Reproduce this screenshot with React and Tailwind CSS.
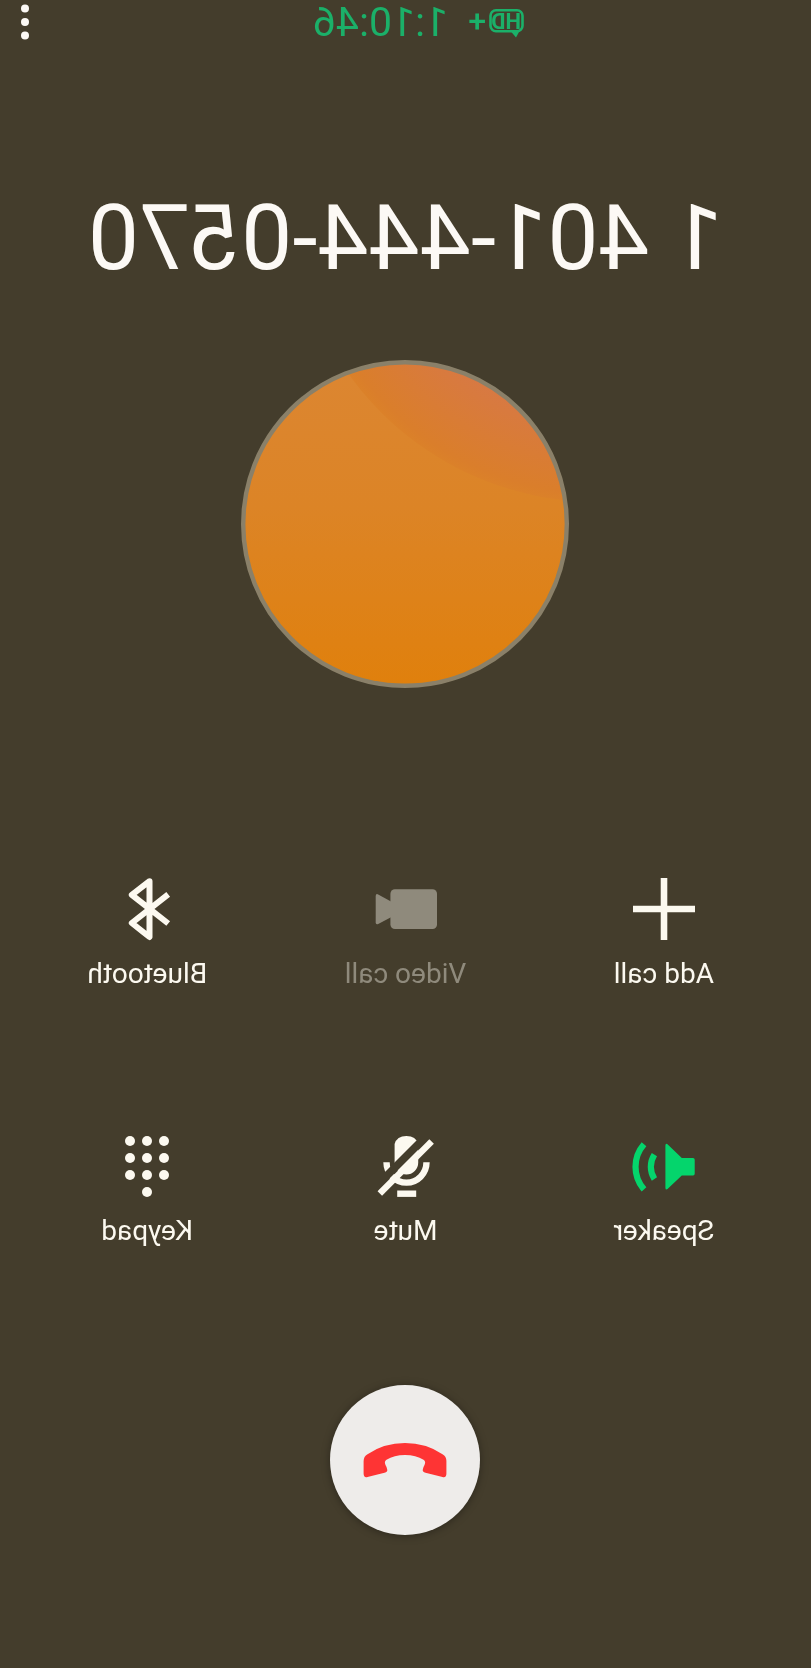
import React from 'react';

const BluetoothIcon = () => (
  <svg viewBox="0 0 64 64" className="w-16 h-16" fill="none" stroke="currentColor" strokeWidth="6" strokeLinejoin="round" aria-hidden="true">
    <path d="M10.8 17.3 47.2 46 29.5 60V4.2L47.2 17.8 10.8 46.5" />
  </svg>
);

const VideoIcon = () => (
  <svg viewBox="0 0 64 64" className="w-16 h-16" fill="currentColor" aria-hidden="true">
    <rect x="1" y="12.3" width="46.6" height="39.7" rx="4.5" />
    <path d="M47 24.5 59.8 17.4Q62.3 16.4 62.3 19V45.4Q62.3 48 59.8 46.9L47 40.2Z" />
  </svg>
);

const PlusIcon = () => (
  <svg viewBox="0 0 64 64" className="w-16 h-16" stroke="currentColor" strokeWidth="6.6" aria-hidden="true">
    <path d="M32 1V63M1 32H63" />
  </svg>
);

const KEY_DOTS = [
  [15, 7], [32, 7], [49, 7],
  [15, 24], [32, 24], [49, 24],
  [15, 41], [32, 41], [49, 41],
  [32, 58],
];

const KeypadIcon = () => (
  <svg viewBox="0 0 64 64" className="w-16 h-16" fill="currentColor" aria-hidden="true">
    {KEY_DOTS.map(([x, y]) => (
      <circle key={`${x}-${y}`} cx={x} cy={y} r="5" />
    ))}
  </svg>
);

const MuteIcon = () => (
  <svg viewBox="0 0 64 64" className="w-16 h-16" fill="none" stroke="currentColor" aria-hidden="true">
    <mask id="mic-cut" maskUnits="userSpaceOnUse" x="0" y="0" width="64" height="64">
      <rect width="64" height="64" fill="#fff" />
      <path d="M7-2.5 71 61.5" stroke="#000" strokeWidth="7.8" />
    </mask>
    <g mask="url(#mic-cut)">
      <path d="M19.8 10Q22 2 31.6 2T43.4 10V28.5A11.8 12 0 0 1 19.8 28.5Z" fill="currentColor" stroke="none" />
      <path d="M11.5 28.3A20 20.3 0 0 0 51.5 28.3" strokeWidth="6.4" />
    </g>
    <path d="M6.4 7.6 58.2 59.4" strokeWidth="6.4" />
    <path d="M21.8 59.7H40.8" strokeWidth="6.4" />
  </svg>
);

const SpeakerIcon = () => (
  <svg viewBox="0 0 64 64" className="w-16 h-16" fill="none" stroke="currentColor" strokeWidth="6.2" aria-hidden="true">
    <path d="M3 24H14.2L28.5 10.3Q30.6 9 30.6 11.6V53.8Q30.6 56.4 28.5 55.1L14.2 41.4H3Q1.3 41.4 1.3 39.7V25.7Q1.3 24 3 24Z" fill="currentColor" stroke="none" />
    <path d="M41.6 20.6A22.5 22.5 0 0 1 41.6 45" />
    <path d="M52 10.2A34.3 34.3 0 0 1 52 55.4" />
  </svg>
);

const HdBadge = () => (
  <svg viewBox="0 0 56 44" className="w-14 h-11" fill="none" stroke="currentColor" role="img" aria-label="HD+">
    <rect x="1.5" y="10.3" width="32" height="21" rx="5.5" strokeWidth="2.6" />
    <path d="M4.5 31H13.5L8 37.5Z" fill="currentColor" stroke="none" />
    <text x="3" y="28.500" fontSize="22" fontWeight="700" fill="currentColor" stroke="none">HD</text>
    <text x="38" y="32" fontSize="32" fontWeight="500" fill="currentColor" stroke="none">+</text>
  </svg>
);

const Avatar = () => (
  <svg viewBox="0 0 328 328" className="w-[328px] h-[328px]" aria-hidden="true">
    <defs>
      <linearGradient id="avatar-base" x1="0" y1="0" x2="0" y2="1">
        <stop offset="0" stopColor="#dc8632" />
        <stop offset="0.45" stopColor="#dc8426" />
        <stop offset="1" stopColor="#e0800c" />
      </linearGradient>
      <radialGradient id="avatar-glow" gradientUnits="userSpaceOnUse" cx="-28" cy="-163" r="305">
        <stop offset="0.66" stopColor="#d77848" />
        <stop offset="0.97" stopColor="#da7e2b" />
        <stop offset="1" stopColor="#db8129" />
      </radialGradient>
      <clipPath id="avatar-clip">
        <circle cx="164" cy="164" r="161" />
      </clipPath>
    </defs>
    <g clipPath="url(#avatar-clip)">
      <rect width="328" height="328" fill="url(#avatar-base)" />
      <circle cx="-28" cy="-163" r="305" fill="url(#avatar-glow)" />
    </g>
    <circle cx="164" cy="164" r="161.8" fill="none" stroke="#8a8069" strokeWidth="4.4" />
  </svg>
);

const EndCallIcon = () => (
  <svg viewBox="0 0 84 36" className="w-[84px] h-9" fill="#fe3434" aria-hidden="true">
    <path d="M0.6 19Q0.6 14.5 4.5 12.2 21 1 42 1T79.5 12.2Q83.4 14.5 83.4 19V31.5Q83.4 36 79.5 35L62.5 30.8Q59.2 30 59.8 27.5 60 25.5 61.5 23 63.2 19.5 60.5 17.8 53 13 42 13T23.5 17.8Q20.8 19.5 22.5 23 24 25.5 24.2 27.5 24.8 30 21.5 30.8L4.5 35Q0.6 36 0.6 31.5Z" />
  </svg>
);

const actions = [
  { id: 'add', label: 'Add call', icon: PlusIcon },
  { id: 'video', label: 'Video call', icon: VideoIcon, disabled: true },
  { id: 'bluetooth', label: 'Bluetooth', icon: BluetoothIcon },
  { id: 'speaker', label: 'Speaker', icon: SpeakerIcon, active: true },
  { id: 'mute', label: 'Mute', icon: MuteIcon },
  { id: 'keypad', label: 'Keypad', icon: KeypadIcon },
];

const ActionButton = ({ label, icon: Icon, active, disabled }) => (
  <button
    type="button"
    disabled={disabled}
    aria-pressed={active}
    className={`flex flex-col items-center gap-[15px] ${disabled ? 'text-[#8f8a7c]' : 'text-[#fcf9f0]'}`}
  >
    <span className={active ? 'text-[#04d56c]' : ''}>
      <Icon />
    </span>
    <span className="text-[28px] leading-9">{label}</span>
  </button>
);

const App = () => (
  <div className="min-h-screen -scale-x-100 bg-[#443d2c] font-['Roboto',sans-serif] text-[#fcf9f5] flex flex-col items-center">
    {/* Call status */}
    <header className="w-full h-11 pl-6 flex items-center">
      <div className="flex-1 flex items-center justify-center gap-5 text-[#1bb069]">
        <HdBadge />
        <span className="text-[41px] leading-[44px]">1:10:46</span>
      </div>
      <button type="button" aria-label="More options" className="w-[50px] flex justify-center">
        <svg viewBox="0 0 8 36" className="w-2 h-9" fill="currentColor" aria-hidden="true">
          <circle cx="4" cy="4.5" r="4" />
          <circle cx="4" cy="18" r="4" />
          <circle cx="4" cy="31.5" r="4" />
        </svg>
      </button>
    </header>

    <main className="w-full flex flex-col items-center">
      <h1 className="mt-[138px] text-[91px] leading-28 whitespace-nowrap">1 401-444-0570</h1>

      <div className="mt-[66px]">
        <Avatar />
      </div>

      {/* Call controls */}
      <div className="mt-[189px] w-full px-[18px] grid grid-cols-3 gap-y-[142px]">
        {actions.map((action) => (
          <ActionButton key={action.id} {...action} />
        ))}
      </div>

      <button
        type="button"
        aria-label="End call"
        className="mt-[136px] w-[150px] h-[150px] rounded-full bg-[#eeecea] flex items-center justify-center shadow-[0_1px_8px_rgba(0,0,0,0.35)]"
      >
        <EndCallIcon />
      </button>
    </main>
  </div>
);

export default App;
